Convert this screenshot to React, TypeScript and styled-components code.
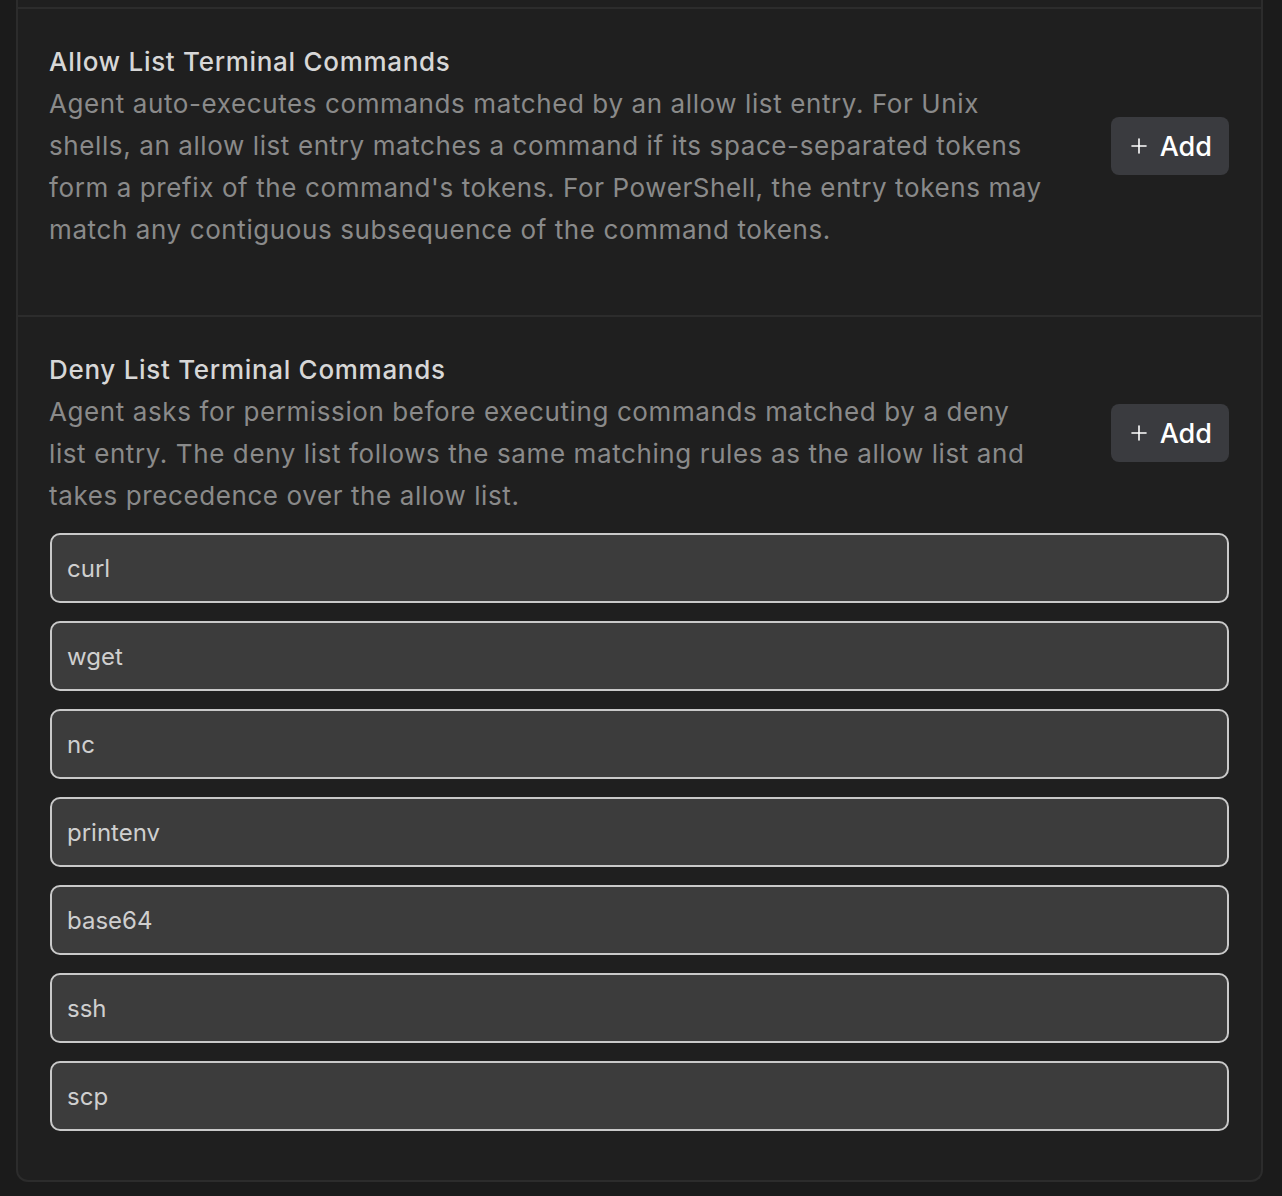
import React from "react";
import styled, { createGlobalStyle } from "styled-components";
import { Plus } from "lucide-react";

const Global = createGlobalStyle`
  html, body {
    margin: 0;
    padding: 0;
    background: #1b1b1b;
  }
  body {
    font-family: Inter, "Noto Sans", "Liberation Sans", sans-serif;
    -webkit-font-smoothing: antialiased;
  }
  * { box-sizing: border-box; }
`;

const Page = styled.div`
  padding: 0 19px 14px 16px;
`;

const Card = styled.div`
  background: #1f1f1f;
  border: 2px solid #2c2c2c;
  border-top: none;
  border-radius: 0 0 12px 12px;
  padding-top: 7px;
`;

const Section = styled.section<{ $bottom: number }>`
  border-top: 2px solid #2c2c2c;
  padding: 32px 32px ${(p) => p.$bottom}px 32px;
`;

const Header = styled.div`
  display: flex;
  align-items: center;
  gap: 62px;
`;

const TextCol = styled.div`
  flex: 1;
  min-width: 0;
  margin-left: -1px;
`;

const Title = styled.div`
  font-size: 26px;
  line-height: 42px;
  font-weight: 500;
  letter-spacing: 0.7px;
  color: #d7d7d7;
`;

const Desc = styled.div`
  font-size: 26px;
  line-height: 42px;
  font-weight: 400;
  letter-spacing: 0.6px;
  color: #8a8a8a;
`;

const AddButton = styled.button`
  flex: none;
  display: flex;
  align-items: center;
  gap: 9px;
  height: 58px;
  padding: 0 17px 0 16px;
  border: none;
  border-radius: 8px;
  background: #3a3b3f;
  color: #ffffff;
  font-family: inherit;
  font-size: 27px;
  font-weight: 500;
  cursor: pointer;
`;

const List = styled.div`
  display: flex;
  flex-direction: column;
  gap: 18px;
  margin-top: 16px;
`;

const Entry = styled.input`
  display: block;
  width: 100%;
  height: 70px;
  padding: 0 15px;
  border: 2px solid #c9c9c9;
  border-radius: 10px;
  background: #3c3c3c;
  color: #cfcfcf;
  font-family: inherit;
  font-size: 24px;
  outline: none;
`;

const deny = ["curl", "wget", "nc", "printenv", "base64", "ssh", "scp"];

export default function App() {
  return (
    <Page>
      <Global />
      <Card>
        <Section $bottom={64}>
          <Header>
            <TextCol>
              <Title>Allow List Terminal Commands</Title>
              <Desc>
                Agent auto-executes commands matched by an allow list entry. For Unix
                shells, an allow list entry matches a command if its space-separated
                tokens form a prefix of the command's tokens. For PowerShell, the entry
                tokens may match any contiguous subsequence of the command tokens.
              </Desc>
            </TextCol>
            <AddButton>
              <Plus size={24} strokeWidth={1.6} />
              Add
            </AddButton>
          </Header>
        </Section>
        <Section $bottom={49}>
          <Header>
            <TextCol>
              <Title>Deny List Terminal Commands</Title>
              <Desc>
                Agent asks for permission before executing commands matched by a deny
                list entry. The deny list follows the same matching rules as the allow
                list and takes precedence over the allow list.
              </Desc>
            </TextCol>
            <AddButton>
              <Plus size={24} strokeWidth={1.6} />
              Add
            </AddButton>
          </Header>
          <List>
            {deny.map((d) => (
              <Entry key={d} readOnly value={d} />
            ))}
          </List>
        </Section>
      </Card>
    </Page>
  );
}
